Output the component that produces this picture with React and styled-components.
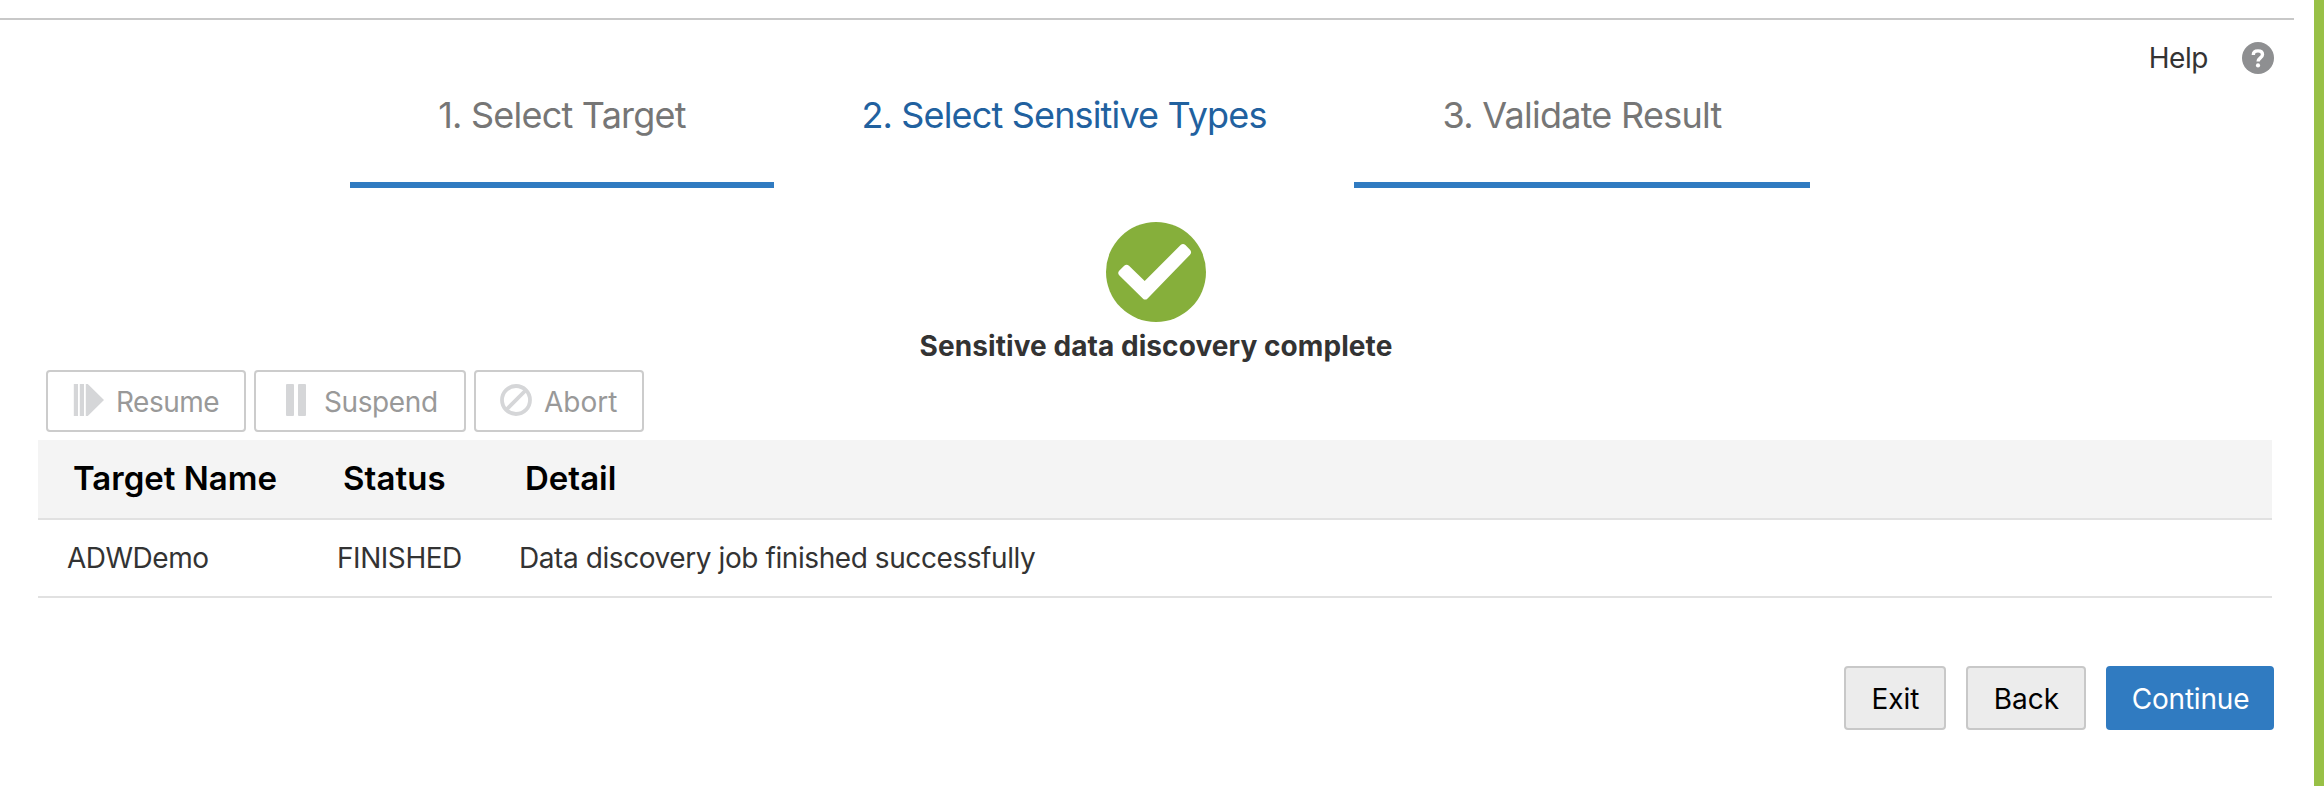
import React from "react";
import styled, { createGlobalStyle } from "styled-components";

const GlobalStyle = createGlobalStyle`
  * { box-sizing: border-box; }
  body {
    margin: 0;
    background: #fff;
    color: #333;
    font: 28px/34px Inter, "Liberation Sans", sans-serif;
  }
`;

const Page = styled.div`
  display: flex;
  flex-direction: column;
  height: 786px;
  padding-top: 18px;
  border-right: 10px solid #98c046;
  overflow: hidden;
`;

const TopRule = styled.div`
  flex: none;
  height: 2px;
  margin-right: 20px;
  background: #c8c8c8;
`;

const HelpBar = styled.div`
  display: flex;
  flex: none;
  justify-content: flex-end;
  align-items: center;
  gap: 34px;
  height: 76px;
  padding-right: 40px;
`;

const Label = styled.span`
  letter-spacing: ${(p) => p.$track || 0}px;
  white-space: nowrap;
`;

const Steps = styled.nav`
  display: flex;
  flex: none;
  height: 92px;
  padding-left: 350px;
`;

const Step = styled.div`
  flex: none;
  width: ${(p) => p.$width}px;
  border-bottom: 6px solid ${(p) => (p.$current ? "transparent" : "#307bc1")};
  color: ${(p) => (p.$current ? "#21619f" : "#767676")};
  font-size: 36px;
  line-height: 38px;
  text-align: center;
`;

const Result = styled.section`
  display: flex;
  flex: none;
  flex-direction: column;
  align-items: center;
  height: 182px;
  padding: 34px 2px 0 0;
  font-weight: 700;
  line-height: 48px;
`;

const Toolbar = styled.div`
  display: flex;
  flex: none;
  gap: 8px;
  height: 70px;
  padding-left: 46px;
`;

const ToolButton = styled.button`
  display: flex;
  align-items: flex-start;
  gap: 12px;
  width: ${(p) => p.$width}px;
  height: 62px;
  padding: 12px 24px;
  border: 2px solid #ccc;
  border-radius: 4px;
  background: #fff;
  color: #999;
  font: inherit;

  svg { flex: none; }
  span { padding-top: 1px; }
`;

const Table = styled.div`
  flex: none;
  margin: 0 42px 0 38px;
`;

const Row = styled.div`
  display: grid;
  grid-template-columns: 270px 182px 1fr;
  height: ${(p) => (p.$head ? 80 : 78)}px;
  padding-left: ${(p) => (p.$head ? 35 : 29)}px;
  border-bottom: 2px solid #e1e1e1;
  background: ${(p) => (p.$head ? "#f4f4f4" : "#fff")};
  color: ${(p) => (p.$head ? "#000" : "#333")};
  font-size: ${(p) => (p.$head ? 33 : 28)}px;
  font-weight: ${(p) => (p.$head ? 600 : 400)};
  line-height: 76px;
`;

const Footer = styled.footer`
  display: flex;
  flex: none;
  justify-content: flex-end;
  gap: 20px;
  padding: 68px 40px 0 0;
`;

const Button = styled.button`
  width: ${(p) => p.$width}px;
  height: 64px;
  padding: 1px 0 0 1px;
  border: 2px solid ${(p) => (p.$primary ? "#307bc1" : "#c8c8c8")};
  border-radius: 4px;
  background: ${(p) => (p.$primary ? "#307bc1" : "#ececec")};
  color: ${(p) => (p.$primary ? "#fff" : "#000")};
  font: inherit;
`;

const HelpIcon = () => (
  <svg width="32" height="32" viewBox="0 0 32 32">
    <circle cx="16" cy="16" r="16" fill="#8e8f91" />
    <path d="M11.3 13C11.3 10 13.2 8.9 16 8.9s4.5 1.5 4.5 3.7c0 3.4-4.4 3.3-4.4 7" fill="none" stroke="#fff" strokeWidth="3.4" />
    <circle cx="16" cy="23.4" r="2.1" fill="#fff" />
  </svg>
);

const CheckIcon = () => (
  <svg width="100" height="100" viewBox="0 0 100 100">
    <circle cx="50" cy="50" r="50" fill="#86af3b" />
    <path d="M13.4 48.5 18.2 43.7Q20.6 41.6 23 43.7L38.7 59 74.6 23Q77 21 79.4 23L84 27.7Q86.2 30.3 84 32.8L41.6 76.4Q39.2 78.8 36.8 76.4L13.4 53.4Q11 51 13.4 48.5Z" fill="#fff" />
  </svg>
);

const ResumeIcon = () => (
  <svg width="32" height="32" viewBox="0 0 32 32" fill="#d5d6d8">
    <path d="M1.8 0h4.2v32H1.8zM7.8 0h4.2v32H7.8zM13.8 0h2L32 16 15.8 32h-2z" />
  </svg>
);

const SuspendIcon = () => (
  <svg width="32" height="32" viewBox="0 0 32 32" fill="#d5d6d8">
    <rect x="6" width="8" height="32" rx="1" />
    <rect x="18" width="8" height="32" rx="1" />
  </svg>
);

const AbortIcon = () => (
  <svg width="32" height="32" viewBox="0 0 32 32" fill="none" stroke="#d5d6d8" strokeWidth="3.8">
    <circle cx="16" cy="16" r="14" />
    <path d="M6.5 25.5 25.5 6.5" />
  </svg>
);

export default function App() {
  return (
    <>
      <GlobalStyle />
      <Page>
        <TopRule />
        <HelpBar>
          <Label $track={-0.45}>Help</Label>
          <HelpIcon />
        </HelpBar>
        <Steps>
          <Step $width={424}><Label $track={-0.78}>1. Select Target</Label></Step>
          <Step $width={580} $current><Label $track={-0.84}>2. Select Sensitive Types</Label></Step>
          <Step $width={456}><Label $track={-0.74}>3. Validate Result</Label></Step>
        </Steps>
        <Result>
          <CheckIcon />
          <Label $track={0.07}>Sensitive data discovery complete</Label>
        </Result>
        <Toolbar>
          <ToolButton $width={200} disabled><ResumeIcon /><Label $track={-0.5}>Resume</Label></ToolButton>
          <ToolButton $width={212} disabled><SuspendIcon /><Label $track={-0.4}>Suspend</Label></ToolButton>
          <ToolButton $width={170} disabled><AbortIcon /><Label>Abort</Label></ToolButton>
        </Toolbar>
        <Table>
          <Row $head>
            <Label>Target Name</Label>
            <Label $track={0.1}>Status</Label>
            <Label>Detail</Label>
          </Row>
          <Row>
            <Label $track={-0.5}>ADWDemo</Label>
            <Label $track={-0.45}>FINISHED</Label>
            <Label $track={-0.42}>Data discovery job finished successfully</Label>
          </Row>
        </Table>
        <Footer>
          <Button $width={102}><Label>Exit</Label></Button>
          <Button $width={120}><Label>Back</Label></Button>
          <Button $width={168} $primary><Label $track={-0.2}>Continue</Label></Button>
        </Footer>
      </Page>
    </>
  );
}
